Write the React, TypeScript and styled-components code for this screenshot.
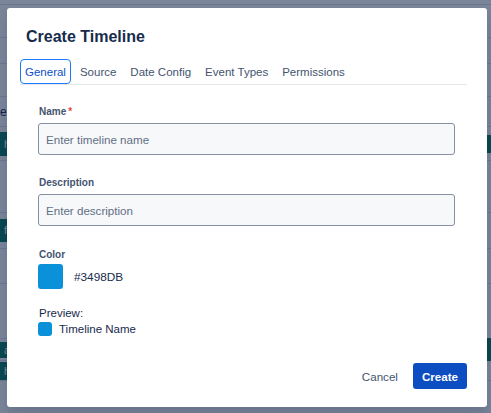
import React, { useState } from "react";
import styled, { createGlobalStyle } from "styled-components";

const GlobalStyle = createGlobalStyle`
  html, body {
    margin: 0;
    padding: 0;
  }
  body {
    font-family: "Liberation Sans", Arial, sans-serif;
    color: #172b4d;
  }
  * {
    box-sizing: border-box;
  }
`;

const Page = styled.div`
  position: relative;
  width: 491px;
  height: 413px;
  overflow: hidden;
  background: #ffffff;
`;

const BgTable = styled.div`
  display: flex;
  flex-direction: column;
  height: 100%;
`;

const BgRow = styled.div<{ $h: number }>`
  height: ${(p) => p.$h}px;
  flex-shrink: 0;
  display: flex;
  align-items: center;
  justify-content: space-between;
  border-bottom: 1px solid #dfe1e6;
  font-size: 12px;
  color: #172b4d;
`;

const BgChip = styled.span<{ $h?: number }>`
  display: inline-block;
  height: ${(p) => p.$h ?? 22}px;
  padding: 0 4px;
  line-height: ${(p) => p.$h ?? 22}px;
  background: #0a7a63;
  color: #ffffff;
  font-size: 11px;
`;

const Overlay = styled.div`
  position: absolute;
  inset: 0;
  background: rgba(9, 30, 66, 0.54);
  display: flex;
  padding: 8px 4px 6px 7px;
`;

const Modal = styled.div`
  flex: 1;
  display: flex;
  flex-direction: column;
  background: #ffffff;
  border-radius: 3px;
  box-shadow: 0 8px 12px rgba(9, 30, 66, 0.15);
`;

const Title = styled.h1`
  margin: 0;
  padding: 19px 19px 0;
  font-size: 16px;
  line-height: 20px;
  font-weight: 700;
  color: #172b4d;
`;

const TabList = styled.div`
  display: flex;
  gap: 4px;
  margin: 12px 20px 0 13px;
  border-bottom: 1px solid #e4e6ea;
`;

const Tab = styled.button<{ $active?: boolean }>`
  height: 25px;
  padding: 0 4px;
  border: 1px solid ${(p) => (p.$active ? "#1d7afc" : "transparent")};
  border-radius: 4px;
  background: transparent;
  font-family: inherit;
  font-size: 11.5px;
  color: ${(p) => (p.$active ? "#0c50c8" : "#44546f")};
  cursor: pointer;
`;

const Panel = styled.div`
  display: flex;
  flex-direction: column;
  padding: 20px 32px 0 31px;
`;

const Field = styled.div<{ $gap?: number }>`
  display: flex;
  flex-direction: column;
  margin-bottom: ${(p) => p.$gap ?? 22}px;
`;

const Label = styled.label`
  font-size: 10px;
  line-height: 14px;
  font-weight: 700;
  color: #44546f;
  margin-bottom: 4px;
  padding-left: 1px;
`;

const Required = styled.span`
  color: #e2483d;
  margin-left: 2px;
`;

const Input = styled.input`
  height: 32px;
  width: 100%;
  padding: 0 7px;
  border: 1px solid #8590a2;
  border-radius: 3px;
  background: #f7f8f9;
  font-family: inherit;
  font-size: 11.6px;
  color: #172b4d;
  outline: none;

  &::placeholder {
    color: #626f86;
  }
`;

const ColorRow = styled.div`
  display: flex;
  align-items: center;
  gap: 11px;
  margin-top: -2px;
`;

const Swatch = styled.div<{ $size: number; $color: string }>`
  width: ${(p) => p.$size}px;
  height: ${(p) => p.$size}px;
  border-radius: 3px;
  background: ${(p) => p.$color};
  flex-shrink: 0;
`;

const ColorValue = styled.span`
  font-size: 11.8px;
  color: #172b4d;
`;

const PreviewLabel = styled.div`
  font-size: 11.5px;
  line-height: 14px;
  color: #172b4d;
  margin-bottom: 2px;
  padding-left: 1px;
`;

const PreviewRow = styled.div`
  display: flex;
  align-items: center;
  gap: 7px;
  font-size: 11.5px;
  color: #172b4d;
`;

const Footer = styled.div`
  margin-top: auto;
  display: flex;
  justify-content: flex-end;
  align-items: center;
  gap: 6px;
  padding: 0 20px 18px;
`;

const Button = styled.button<{ $primary?: boolean }>`
  height: 26px;
  padding: 0 9px;
  border: none;
  border-radius: 3px;
  font-family: inherit;
  font-size: 11.6px;
  font-weight: ${(p) => (p.$primary ? 700 : 400)};
  background: ${(p) => (p.$primary ? "#0c4dc2" : "transparent")};
  color: ${(p) => (p.$primary ? "#ffffff" : "#44546f")};
  cursor: pointer;
`;

const tabs = ["General", "Source", "Date Config", "Event Types", "Permissions"];

export default function App() {
  const [active, setActive] = useState("General");
  const color = "#0b91d9";

  return (
    <Page>
      <GlobalStyle />
      <BgTable>
        <BgRow $h={5} />
        <BgRow $h={33} />
        <BgRow $h={26} />
        <BgRow $h={33} />
        <BgRow $h={30}>
          <span>eb</span>
        </BgRow>
        <BgRow $h={34}>
          <BgChip $h={24}>hb</BgChip>
          <BgChip $h={18}>&nbsp;</BgChip>
        </BgRow>
        <BgRow $h={52}>
          <span />
        </BgRow>
        <BgRow $h={36}>
          <BgChip $h={23}>fo</BgChip>
        </BgRow>
        <BgRow $h={35} />
        <BgRow $h={55} />
        <BgRow $h={22}>
          <BgChip $h={16}>ain</BgChip>
          <BgChip $h={23}>&nbsp;</BgChip>
        </BgRow>
        <BgRow $h={20}>
          <BgChip $h={18}>h</BgChip>
        </BgRow>
      </BgTable>
      <Overlay>
        <Modal>
          <Title>Create Timeline</Title>
          <TabList>
            {tabs.map((t) => (
              <Tab key={t} $active={t === active} onClick={() => setActive(t)}>
                {t}
              </Tab>
            ))}
          </TabList>
          <Panel>
            <Field $gap={21}>
              <Label>
                Name<Required>*</Required>
              </Label>
              <Input placeholder="Enter timeline name" />
            </Field>
            <Field>
              <Label>Description</Label>
              <Input placeholder="Enter description" />
            </Field>
            <Field $gap={17}>
              <Label>Color</Label>
              <ColorRow>
                <Swatch $size={25} $color={color} />
                <ColorValue>#3498DB</ColorValue>
              </ColorRow>
            </Field>
            <PreviewLabel>Preview:</PreviewLabel>
            <PreviewRow>
              <Swatch $size={14} $color={color} />
              <span>Timeline Name</span>
            </PreviewRow>
          </Panel>
          <Footer>
            <Button>Cancel</Button>
            <Button $primary>Create</Button>
          </Footer>
        </Modal>
      </Overlay>
    </Page>
  );
}
